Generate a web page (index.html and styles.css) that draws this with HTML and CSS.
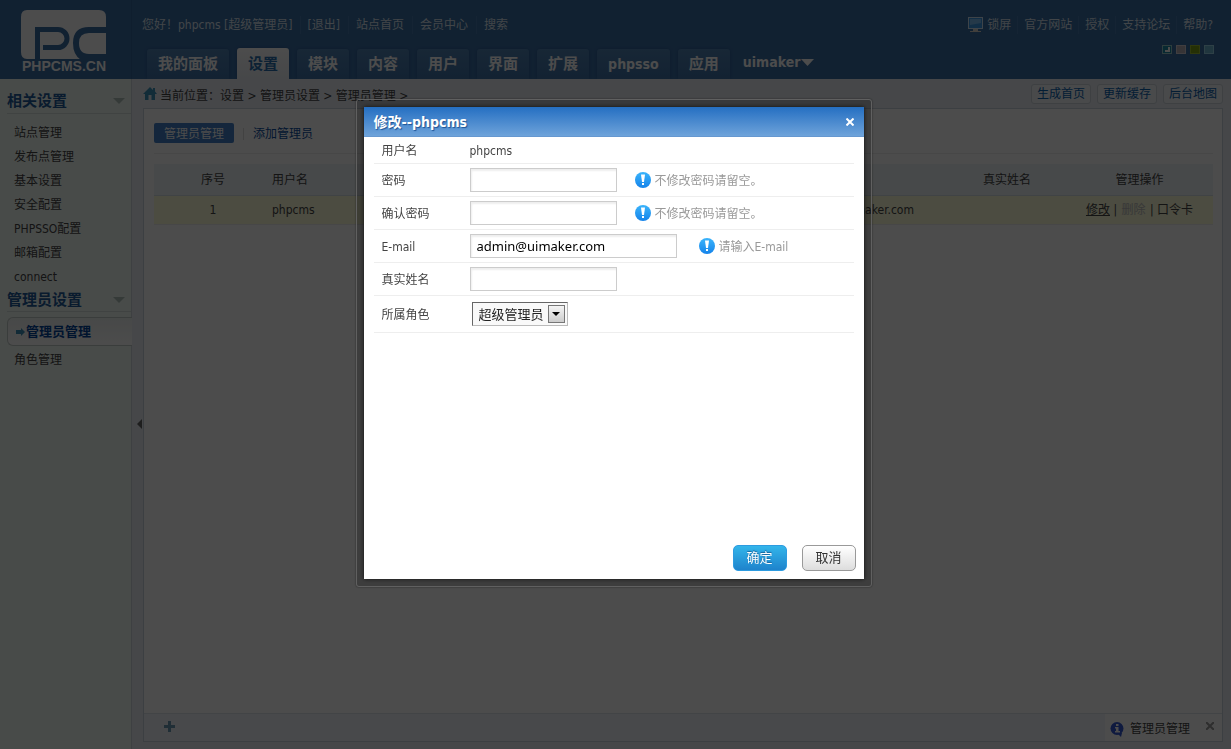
FILE: index.html
```html
<!DOCTYPE html>
<html lang="zh-CN">
<head>
<meta charset="utf-8">
<title>修改--phpcms</title>
<link rel="stylesheet" href="styles.css">
</head>
<body>
<div class="app">
  <header class="header">
    <a class="logo" href="#" aria-label="PHPCMS.CN">
      <svg width="92" height="66" viewBox="0 0 92 66">
        <path fill="#fff" d="M8 1H80Q87 1 87 8V50H8Q2 50 2 43V8Q2 1 8 1Z"/>
        <path fill="none" stroke="#3a6ea5" stroke-width="5" d="M18.500 51V20.500H39a9 9 0 0 1 0 18H24"/>
        <path fill="#3a6ea5" d="M88 18H70Q54 18 54 34Q54 46 62 51H88V45H70Q60 45 60 34Q60 24 70 24H88Z"/>
        <text x="3" y="62" class="logo-text">PHPCMS.CN</text>
      </svg>
    </a>
    <div class="head-main">
      <div class="head-top">
        <div class="links">
          <span>您好！phpcms [超级管理员]</span><a href="#">[退出]</a><a href="#">站点首页</a><a href="#">会员中心</a><a href="#">搜索</a>
        </div>
        <div class="links links-right">
          <a href="#" class="lock"><svg width="15" height="16" viewBox="0 0 15 16"><rect x=".5" y=".5" width="14" height="11" fill="#3f9be8" stroke="#cfe4f5"/><path d="M2 2H13V6L2 8Z" fill="#7cc0f5"/><path d="M5 12H10V14H13V15H2V14H5Z" fill="#d9d2c8"/></svg>锁屏</a><a href="#">官方网站</a><a href="#">授权</a><a href="#">支持论坛</a><a href="#">帮助?</a>
        </div>
      </div>
      <div class="head-bottom">
        <nav class="tabs">
          <a href="#">我的面板</a><a href="#" class="on">设置</a><a href="#">模块</a><a href="#">内容</a><a href="#">用户</a><a href="#">界面</a><a href="#">扩展</a><a href="#" class="latin">phpsso</a><a href="#">应用</a>
          <button class="site">uimaker<svg width="13" height="7" viewBox="0 0 13 7"><path d="M0 0H13L6.500 7Z" fill="#fff"/></svg></button>
        </nav>
        <div class="skins">
          <button class="skin teal" aria-label="皮肤一"><svg width="8" height="7" viewBox="0 0 8 7"><path d="M6 1V5H2" fill="none" stroke="#fff" stroke-width="2"/></svg></button><button class="skin grey" aria-label="皮肤二"></button><button class="skin green" aria-label="皮肤三"></button><button class="skin sky" aria-label="皮肤四"></button>
        </div>
      </div>
    </div>
  </header>

  <div class="body">
    <aside class="side">
      <h3>相关设置<i class="tri"></i></h3>
      <ul>
        <li><a href="#">站点管理</a></li><li><a href="#">发布点管理</a></li><li><a href="#">基本设置</a></li><li><a href="#">安全配置</a></li><li><a href="#">PHPSSO配置</a></li><li><a href="#">邮箱配置</a></li><li><a href="#">connect</a></li>
      </ul>
      <h3 class="second">管理员设置<i class="tri"></i></h3>
      <a href="#" class="current"><svg width="9" height="8" viewBox="0 0 9 8"><path d="M0 2H5V0L9 4L5 8V6H0Z" fill="#3f8fb8"/></svg>管理员管理</a>
      <ul>
        <li><a href="#">角色管理</a></li>
      </ul>
    </aside>
    <button class="fold" aria-label="收起"><i></i></button>
    <main class="main">
      <div class="crumbs">
        <svg width="14" height="13" viewBox="0 0 14 13"><path d="M7 0L10 3V1H12V4.500L14 7H12V13H8.500V8H5.500V13H2V7H0Z" fill="#3f94bd"/></svg>
        <span class="path">当前位置：设置 &gt; 管理员设置 &gt; 管理员管理 &gt;</span>
        <a href="#" class="quick">生成首页</a><a href="#" class="quick">更新缓存</a><a href="#" class="quick">后台地图</a>
      </div>
      <div class="panel">
        <div class="content">
          <div class="subnav"><a href="#" class="active">管理员管理</a><i></i><a href="#">添加管理员</a></div>
          <table class="grid">
            <colgroup><col class="c1"><col class="c2"><col><col class="c4"><col class="c5"></colgroup>
            <thead><tr><th>序号</th><th class="left">用户名</th><th></th><th>真实姓名</th><th>管理操作</th></tr></thead>
            <tbody><tr><td>1</td><td class="left">phpcms</td><td class="mail">admin@uimaker.com</td><td></td><td><a href="#" class="edit">修改</a> | <span class="off">删除</span> | <a href="#">口令卡</a></td></tr></tbody>
          </table>
        </div>
        <footer class="foot">
          <div class="fav"><svg width="11" height="11" viewBox="0 0 11 11"><path d="M4 0H7V4H11V7H7V11H4V7H0V4H4Z" fill="#6d99b5"/></svg></div>
          <div class="help"><svg width="15" height="15" viewBox="0 0 15 15"><circle cx="7" cy="6.500" r="6.500" fill="#3359d2"/><path d="M7 11H12L11 15Z" fill="#3359d2"/><path d="M6 2H8.500V4H6ZM5 5H8.500V9H10V10.500H5V9H6V6.500H5Z" fill="#fff"/></svg>管理员管理<button aria-label="关闭提示"><svg width="8" height="8" viewBox="0 0 8 8"><path d="M0 0L8 8M8 0L0 8" stroke="#999" stroke-width="2"/></svg></button></div>
        </footer>
      </div>
    </main>
  </div>
</div>

<div class="mask">
  <div class="frame" role="dialog" aria-labelledby="dlg-title">
    <form class="dialog">
      <div class="title"><h2 id="dlg-title">修改--phpcms</h2><button type="button" aria-label="关闭"><svg width="8" height="8" viewBox="0 0 8 8"><path d="M.5 .5L7.500 7.500M7.500 .5L.5 7.500" stroke="#fff" stroke-width="2"/></svg></button></div>
      <div class="fields">
        <div class="row short"><span class="label">用户名</span><span>phpcms</span></div>
        <div class="row"><label class="label" for="pwd">密码</label><input id="pwd" type="password"><span class="tip"><svg width="16" height="16" viewBox="0 0 16 16"><use href="#bang"/></svg><span>不修改密码请留空。</span></span></div>
        <div class="row"><label class="label" for="pwd2">确认密码</label><input id="pwd2" type="password"><span class="tip"><svg width="16" height="16" viewBox="0 0 16 16"><use href="#bang"/></svg><span>不修改密码请留空。</span></span></div>
        <div class="row"><label class="label" for="mail">E-mail</label><input id="mail" class="wide" type="text" value="admin@uimaker.com"><span class="tip far"><svg width="16" height="16" viewBox="0 0 16 16"><use href="#bang"/></svg><span>请输入E-mail</span></span></div>
        <div class="row"><label class="label" for="real">真实姓名</label><input id="real" type="text"></div>
        <div class="row tall"><label class="label" for="role">所属角色</label><span class="pick"><select id="role"><option>超级管理员</option></select><i class="drop"></i></span></div>
      </div>
      <div class="actions"><button type="submit" class="ok">确定</button><button type="button" class="cancel">取消</button></div>
    </form>
  </div>
</div>

<svg class="defs" width="0" height="0" aria-hidden="true">
  <defs>
    <linearGradient id="blue" x1="0" y1="0" x2="0" y2="1"><stop offset="0" stop-color="#3bb4fb"/><stop offset="1" stop-color="#1583ea"/></linearGradient>
    <g id="bang"><circle cx="8" cy="8" r="8" fill="url(#blue)"/><path d="M6 2.500H10L9 10H7Z" fill="#fff"/><rect x="7" y="11" width="2" height="2" fill="#fff"/></g>
  </defs>
</svg>
</body>
</html>
```
FILE: styles.css
```css
* { box-sizing: border-box; }
body {
  margin: 0;
  font: 12px/18px "DejaVu Sans Condensed", "Noto Sans CJK SC", sans-serif;
  color: #444;
}
a { color: inherit; text-decoration: none; }
ul { list-style: none; margin: 0; padding: 0; }
h2, h3 { margin: 0; }
button { font: inherit; border: 0; padding: 0; background: none; cursor: pointer; }
svg { display: block; flex: none; }
.defs { position: absolute; }

.app { min-height: 100vh; display: flex; flex-direction: column; }
.header { height: 79px; display: flex; background: #3a6ea5; }
.logo { width: 132px; padding: 9px 0 0 19px; border-right: 1px solid #34659a; }
.logo-text { font: bold 14px "Liberation Sans", sans-serif; fill: #fff; }
.head-main { flex: 1; display: flex; flex-direction: column; justify-content: space-between; padding-left: 10px; }
.head-top { display: flex; justify-content: space-between; padding: 16px 13px 0 0; color: #dbe6f1; }
.links { display: flex; }
.links > * { padding: 0 8px 0 7px; border-left: 1px solid #467aae; line-height: 18px; }
.links > :first-child { border: 0; padding: 0 7px 0 0; }
.links-right > * { padding: 0 6px; }
.links-right > :first-child { padding-right: 6px; }
.links-right > :last-child { padding-right: 5px; }
.links .lock { display: flex; align-items: center; gap: 4px; }
.head-bottom { display: flex; justify-content: space-between; }
.tabs { display: flex; gap: 8px; align-items: flex-end; padding-left: 5px; font-size: 15px; font-weight: bold; color: #fff; }
.tabs a {
  height: 30px;
  padding: 0 11px;
  line-height: 30px;
  border-radius: 3px 3px 0 0;
  background: linear-gradient(#5083b4, #3f72a8);
  box-shadow: 0 0 3px #2c5c90;
}
.tabs .latin, .site { font-size: 14px; }
.tabs .on { height: 31px; line-height: 32px; background: linear-gradient(#fff, #eaeef4); color: #2a6fb0; }
.site { display: flex; align-items: center; gap: 1px; height: 34px; padding-left: 5px; color: #fff; font-weight: bold; }
.skins { display: flex; gap: 4px; padding-right: 17px; }
.skin { width: 10px; height: 9px; border: 1px solid #9cc; }
.teal { background: #1b8aa5; }
.grey { background: #b5b0b5; border-color: #d5d0d5; }
.green { background: #7da012; border-color: #a0c030; }
.sky { background: #6bb5cf; border-color: #9bd5e9; }

.body { flex: 1; display: flex; background: #eaeef4; }
.side { width: 132px; padding-left: 7px; background: #f2fbf6; border-right: 1px solid #d0d6dc; }
.side h3 {
  display: flex;
  align-items: center;
  justify-content: space-between;
  height: 35px;
  padding: 10px 6px 0 0;
  font-size: 15px;
  color: #1f5a99;
  border-bottom: 1px solid #d8e0dc;
}
.side .second { height: 24px; padding-top: 0; }
.tri { border: 6px solid transparent; border-top-color: #b2c4bc; border-bottom: 0; }
.side ul { padding: 7px 0 0 7px; }
.side li { line-height: 24px; }
.side h3 + ul { height: 174px; }
.current {
  display: flex;
  align-items: center;
  height: 29px;
  margin: 5px -1px 0 0;
  padding-left: 8px;
  border: 1px solid #c4ccc8;
  border-right: 0;
  border-radius: 6px 0 0 6px;
  background: linear-gradient(#eef3f1, #fff);
  font-size: 13px;
  font-weight: bold;
  color: #00439b;
  gap: 1px;
}
.current + ul { padding-top: 2px; }
.fold { width: 11px; display: flex; align-items: center; padding: 20px 0 0 5px; }
.fold i { border: 5px solid transparent; border-right-color: #666; border-left: 0; }
.main { flex: 1; display: flex; flex-direction: column; padding: 0 8px 7px 0; }
.crumbs { display: flex; align-items: center; height: 29px; gap: 3px; }
.path { flex: 1; padding-top: 4px; }
.crumbs .quick {
  height: 20px;
  margin-left: 3px;
  padding: 0 5px;
  border: 1px solid #cfd6de;
  border-radius: 3px;
  background: #f4f7fa;
  color: #0a62b0;
}
.panel { flex: 1; display: flex; flex-direction: column; background: #fff; border: 1px solid #c9d3de; }
.content { flex: 1; padding: 14px 9px 0 10px; }
.subnav { display: flex; align-items: flex-start; height: 31px; border-bottom: 1px solid #eee; color: #0a4da0; gap: 9px; line-height: 22px; }
.subnav .active { height: 20px; padding: 0 10px; border-radius: 2px; background: #4380c8; color: #fff; }
.subnav i { width: 1px; height: 12px; margin-top: 5px; background: #ddd; }
.grid { width: 100%; margin-top: 10px; border-collapse: collapse; table-layout: fixed; }
.c1 { width: 118px; }
.c2 { width: 240px; }
.c4 { width: 118px; }
.c5 { width: 147px; }
.grid th { height: 31px; padding: 2px 0 0; font-weight: normal; background: #eef3f7; border-bottom: 1px solid #d5dfe8; }
.grid td { height: 29px; padding: 0; text-align: center; background: #fdfdd9; border-bottom: 1px solid #eee; }
.grid .left { text-align: left; }
.grid .mail { text-align: right; padding-right: 34px; }
.edit { text-decoration: underline; }
.off { margin: 0 1px; color: #bbb; }
.foot { display: flex; height: 28px; border-top: 1px solid #dde3ea; background: #fff; }
.fav { flex: 1; display: flex; align-items: center; padding: 0 0 3px 20px; background: #f1f6fa; }
.help { display: flex; align-items: center; padding: 3px 8px 0 5px; gap: 5px; }
.help button { margin: 0 0 6px 11px; }

.mask { position: fixed; inset: 0; display: flex; justify-content: center; align-items: flex-start; padding: 99px 4px 0 0; background: rgba(0, 0, 0, .7); }
.frame {
  padding: 7px;
  background: rgba(0, 0, 0, .2);
  border: 1px solid #606060;
  border-radius: 3px;
  box-shadow: 0 0 2px #222;
}
.dialog { display: flex; flex-direction: column; width: 500px; height: 472px; background: #fff; box-shadow: 0 0 4px #111; }
.title { display: flex; justify-content: space-between; align-items: center; height: 30px; padding: 0 10px; background: linear-gradient(#256fc2, #6ea3da); border-bottom: 1px solid #6698d0; color: #fff; }
.title h2 { font-size: 14px; line-height: 20px; text-shadow: 1px 1px 1px #1d5394; }
.fields { flex: 1; padding: 0 10px; }
.row { display: flex; align-items: center; height: 33px; padding-left: 8px; border-bottom: 1px solid #eee; }
.short { height: 27px; }
.short span { padding-top: 2px; }
.tall { height: 37px; }
.row .label { width: 88px; padding-top: 2px; }
.row input {
  width: 147px;
  height: 24px;
  padding: 0 6px;
  border: 1px solid #ccc;
  background: #fff;
  box-shadow: inset 1px 2px 2px #eee;
  font: 13px "Noto Sans", sans-serif;
  color: #000;
}
.row .wide { width: 207px; }
.tip { display: flex; align-items: center; gap: 4px; margin-left: 18px; color: #999; }
.tip span { padding-top: 2px; }
.far { margin-left: 22px; }
.pick { display: grid; margin-left: 2px; align-items: center; }
.pick > * { grid-area: 1 / 1; }
.pick select {
  appearance: none;
  width: 96px;
  height: 24px;
  padding: 0 6px 2px;
  border: 1px solid #ccc;
  border-color: #666 #bbb #bbb #666;
  border-radius: 0;
  background: #f9f9f9;
  color: #222;
  font: 13px "Noto Sans CJK SC", sans-serif;
}
.drop {
  display: grid;
  place-items: center;
  justify-self: end;
  width: 17px;
  height: 18px;
  margin-right: 3px;
  border: 1px solid #777;
  background: linear-gradient(#f4f4f4, #ccc);
  pointer-events: none;
}
.drop::before { content: ""; border: 4px solid transparent; border-top-color: #000; border-bottom: 0; }
.actions { display: flex; justify-content: flex-end; gap: 15px; padding: 0 8px 8px 0; }
.actions button { width: 54px; height: 26px; border-radius: 5px; font-size: 13px; }
.ok { background: linear-gradient(#33b5ea, #1e83cc); border: 1px solid #2d9be0; color: #fff; text-shadow: 0 -1px 1px #19649c; }
.cancel { background: linear-gradient(#fff, #ddd); border: 1px solid #999; color: #333; }
```
